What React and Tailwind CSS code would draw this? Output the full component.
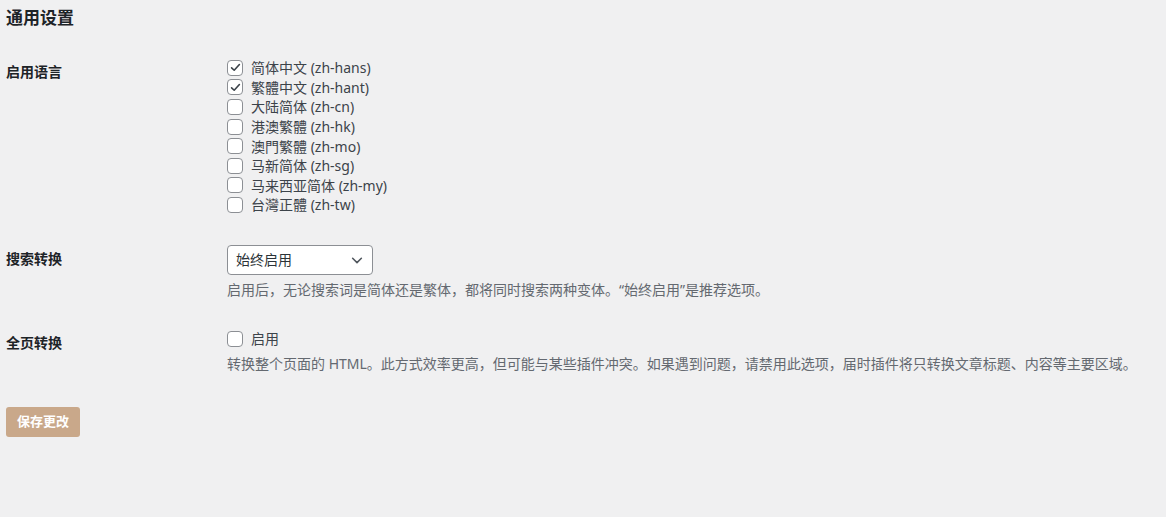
import React from "react";

const font = { fontFamily: '"Noto Sans", "Noto Sans CJK SC", sans-serif' };

function Check({ checked, label }) {
  return (
    <label className="flex items-center h-[19.6px] text-[14px] text-[#3c434a]">
      <span className="w-4 h-4 mr-[8px] rounded-[4px] border border-[#8c8f94] bg-white flex items-center justify-center shrink-0">
        {checked && (
          <svg width="13" height="13" viewBox="0 0 16 16">
            <path d="M3.2 8.4 L6.4 11.4 L12.8 4.4" fill="none" stroke="#3c434a" strokeWidth="2" strokeLinecap="round" strokeLinejoin="round" />
          </svg>
        )}
      </span>
      <span>{label}</span>
    </label>
  );
}

export default function App() {
  const langs = [
    ["简体中文 (zh-hans)", true],
    ["繁體中文 (zh-hant)", true],
    ["大陆简体 (zh-cn)", false],
    ["港澳繁體 (zh-hk)", false],
    ["澳門繁體 (zh-mo)", false],
    ["马新简体 (zh-sg)", false],
    ["马来西亚简体 (zh-my)", false],
    ["台灣正體 (zh-tw)", false],
  ];
  return (
    <div className="w-[1166px] h-[517px] bg-[#f0f0f1] pl-[6px] overflow-hidden" style={font}>
      <h2 className="pt-[6px] text-[17px] leading-[24px] font-bold text-[#1d2327]">通用设置</h2>

      <div className="flex mt-[28px]">
        <div className="w-[221px] pt-[4px] text-[14px] leading-[20px] font-bold text-[#1d2327]">启用语言</div>
        <div className="flex flex-col">
          {langs.map(([l, c]) => (
            <Check key={l} label={l} checked={c} />
          ))}
        </div>
      </div>

      <div className="flex mt-[30px]">
        <div className="w-[221px] pt-[4px] text-[14px] leading-[20px] font-bold text-[#1d2327]">搜索转换</div>
        <div className="flex flex-col">
          <div className="w-[146px] h-[30px] border border-[#8c8f94] rounded-[4px] bg-white flex items-center justify-between pl-[8px] pr-[8px] text-[14px] text-[#2c3338]">
            <span>始终启用</span>
            <svg width="14" height="14" viewBox="0 0 16 16">
              <path d="M3 6 L8 11 L13 6" fill="none" stroke="#50575e" strokeWidth="1.8" strokeLinecap="round" strokeLinejoin="round" />
            </svg>
          </div>
          <p className="mt-[6px] text-[14px] leading-[18px] text-[#646970]">
            启用后，无论搜索词是简体还是繁体，都将同时搜索两种变体。“始终启用”是推荐选项。
          </p>
        </div>
      </div>

      <div className="flex mt-[30px]">
        <div className="w-[221px] pt-[4px] text-[14px] leading-[20px] font-bold text-[#1d2327]">全页转换</div>
        <div className="flex flex-col">
          <div className="h-[20px] flex items-center">
            <Check label="启用" checked={false} />
          </div>
          <p className="mt-[6px] text-[14px] leading-[18px] text-[#646970]">
            转换整个页面的 HTML。此方式效率更高，但可能与某些插件冲突。如果遇到问题，请禁用此选项，届时插件将只转换文章标题、内容等主要区域。
          </p>
        </div>
      </div>

      <button className="mt-[34px] h-[30px] px-[11px] rounded-[3px] bg-[#c9a88a] text-white text-[13px] font-bold">
        保存更改
      </button>
    </div>
  );
}
